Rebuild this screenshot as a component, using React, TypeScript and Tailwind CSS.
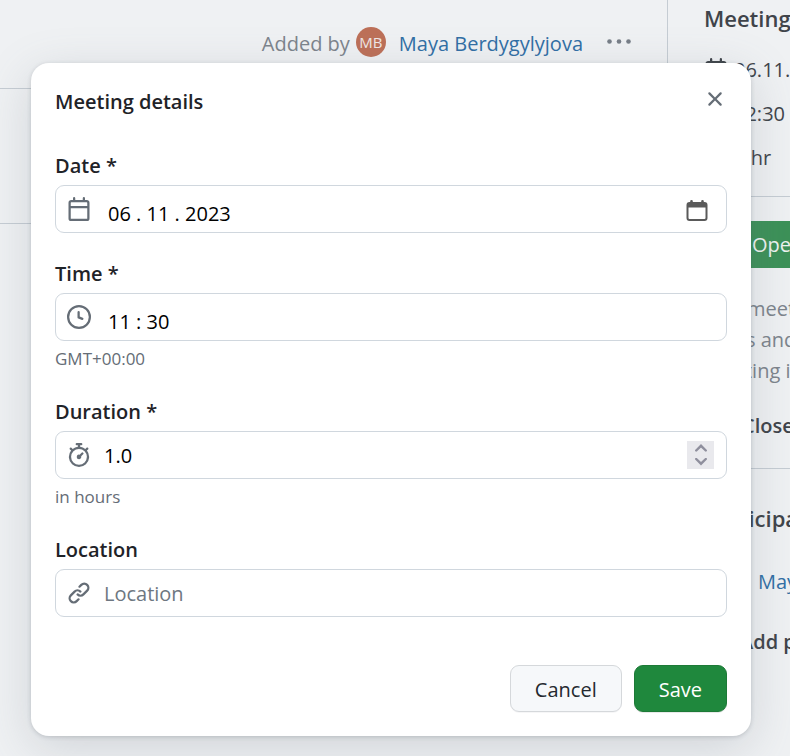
import React, { useState } from "react";

const icons = {
  calendar:
    "M4.75 0a.75.75 0 0 1 .75.75V2h5V.75a.75.75 0 0 1 1.5 0V2h1.25c.966 0 1.75.784 1.75 1.75v10.5A1.75 1.75 0 0 1 13.25 16H2.75A1.75 1.75 0 0 1 1 14.25V3.75C1 2.784 1.784 2 2.75 2H4V.75A.75.75 0 0 1 4.75 0ZM2.5 7.5v6.75c0 .138.112.25.25.25h10.5a.25.25 0 0 0 .25-.25V7.5Zm10.75-4H2.75a.25.25 0 0 0-.25.25V6h11V3.75a.25.25 0 0 0-.25-.25Z",
  clock:
    "M8 0a8 8 0 1 1 0 16A8 8 0 0 1 8 0ZM1.5 8a6.5 6.5 0 1 0 13 0 6.5 6.5 0 0 0-13 0Zm7-3.25v2.992l2.028.812a.75.75 0 0 1-.557 1.392l-2.5-1A.751.751 0 0 1 7 8.25v-3.5a.75.75 0 0 1 1.5 0Z",
  stopwatch:
    "M5.75.75A.75.75 0 0 1 6.5 0h3a.75.75 0 0 1 0 1.5h-.75v1l-.001.041a6.724 6.724 0 0 1 3.464 1.435l.007-.006.75-.75a.749.749 0 0 1 1.275.326.749.749 0 0 1-.215.734l-.75.75-.006.007a6.75 6.75 0 1 1-10.548 0L2.72 5.03l-.75-.75a.751.751 0 0 1 .018-1.042.751.751 0 0 1 1.042-.018l.75.75.007.006A6.72 6.72 0 0 1 7.25 2.541V1.5H6.5a.75.75 0 0 1-.75-.75ZM8 14.5a5.25 5.25 0 1 0-.001-10.501A5.25 5.25 0 0 0 8 14.5Zm.389-6.7 1.33-1.33a.75.75 0 1 1 1.061 1.06L9.45 8.861A1.503 1.503 0 0 1 8 10.75a1.499 1.499 0 1 1 .389-2.95Z",
  link: "m7.775 3.275 1.25-1.25a3.5 3.5 0 1 1 4.95 4.95l-2.5 2.5a3.5 3.5 0 0 1-4.95 0 .751.751 0 0 1 .018-1.042.751.751 0 0 1 1.042-.018 1.998 1.998 0 0 0 2.83 0l2.5-2.5a2.002 2.002 0 0 0-2.83-2.83l-1.25 1.25a.751.751 0 0 1-1.042-.018.751.751 0 0 1-.018-1.042Zm-4.69 9.64a1.998 1.998 0 0 0 2.83 0l1.25-1.25a.751.751 0 0 1 1.042.018.751.751 0 0 1 .018 1.042l-1.25 1.25a3.5 3.5 0 1 1-4.95-4.95l2.5-2.5a3.5 3.5 0 0 1 4.95 0 .751.751 0 0 1-.018 1.042.751.751 0 0 1-1.042.018 1.998 1.998 0 0 0-2.83 0l-2.5 2.5a1.998 1.998 0 0 0 0 2.83Z",
  x: "M3.72 3.72a.75.75 0 0 1 1.06 0L8 6.94l3.22-3.22a.749.749 0 0 1 1.275.326.749.749 0 0 1-.215.734L9.06 8l3.22 3.22a.749.749 0 0 1-.326 1.275.749.749 0 0 1-.734-.215L8 9.06l-3.22 3.22a.751.751 0 0 1-1.042-.018.751.751 0 0 1-.018-1.042L6.94 8 3.72 4.78a.75.75 0 0 1 0-1.06Z",
};

function Icon({ name }: { name: keyof typeof icons }) {
  return (
    <svg viewBox="0 0 16 16" className="size-6 shrink-0 fill-current" aria-hidden="true">
      <path d={icons[name]} />
    </svg>
  );
}

type FieldProps = {
  id: string;
  label: string;
  icon: keyof typeof icons;
  initial?: string;
  placeholder?: string;
  hint?: string;
  segmented?: boolean;
  children?: React.ReactNode;
};

function Field({ id, label, icon, initial = "", placeholder, hint, segmented, children }: FieldProps) {
  const [value, setValue] = useState(initial);
  return (
    <div>
      <label htmlFor={id} className="block pt-px pb-[3px] text-[20px] leading-8 font-semibold text-[#1f2328]">
        {label}
      </label>
      <div className="flex h-12 items-center rounded-[9px] border border-[#d0d7de] bg-white pr-3 pl-[11px] text-[#656d76]">
        <Icon name={icon} />
        <input
          id={id}
          type="text"
          value={value}
          placeholder={placeholder}
          onChange={(e) => setValue(e.target.value)}
          className={
            "min-w-0 flex-1 bg-transparent text-[20px] leading-8 text-black outline-none placeholder:text-[#6e7781] " +
            (segmented ? "pt-[10px] pl-[17px]" : "pt-[2px] pl-[13px]")
          }
        />
        {children}
      </div>
      {hint && <p className="pt-[6px] text-[17px] leading-6 text-[#656d76]">{hint}</p>}
    </div>
  );
}

function Dialog() {
  return (
    <div
      role="dialog"
      aria-labelledby="dialog-title"
      className="w-full max-w-[720px] rounded-[18px] bg-white p-6 shadow-[0_1px_4px_rgba(66,74,83,0.22),0_12px_48px_rgba(100,110,122,0.22)]"
    >
      <div className="-mt-[11px] flex items-center justify-between">
        <h1 id="dialog-title" className="pt-[6px] text-[20px] leading-10 font-semibold text-[#1f2328]">
          Meeting details
        </h1>
        <button type="button" aria-label="Close" className="text-[#656d76]">
          <Icon name="x" />
        </button>
      </div>
      <form className="flex flex-col gap-6 pt-[27px]">
        <Field id="date" label="Date *" icon="calendar" initial="06 . 11 . 2023" segmented>
          <button type="button" aria-label="Show date picker" className="pt-1 pr-[5px] text-[#5a5a5a]">
            <svg viewBox="0 0 24 24" className="size-6" aria-hidden="true">
              <path
                fill="currentColor"
                fillRule="evenodd"
                d="M6.500 1a1.300 1.300 0 0 1 1.300 1.300V3h8.400v-.7a1.300 1.300 0 0 1 2.600 0V3H19.500a3 3 0 0 1 3 3v13a3 3 0 0 1-3 3h-15a3 3 0 0 1-3-3V6a3 3 0 0 1 3-3h.7v-.7A1.300 1.300 0 0 1 6.500 1ZM3.500 8.500V19a1 1 0 0 0 1 1h15a1 1 0 0 0 1-1V8.500Z"
              />
            </svg>
          </button>
        </Field>
        <Field id="time" label="Time *" icon="clock" initial="11 : 30" hint="GMT+00:00" segmented />
        <Field id="duration" label="Duration *" icon="stopwatch" initial="1.0" hint="in hours">
          <div className="flex h-7 w-[27px] flex-col items-center bg-[#e9e9ed] text-[#8f8f9d]">
            <button type="button" aria-label="Increase duration" className="flex h-1/2 items-center">
              <svg viewBox="0 0 12 8" className="h-2 w-3" aria-hidden="true">
                <path d="M1.200 6.500 6 1.800l4.800 4.700" fill="none" stroke="currentColor" strokeWidth="2.400" strokeLinecap="round" />
              </svg>
            </button>
            <button type="button" aria-label="Decrease duration" className="flex h-1/2 items-center">
              <svg viewBox="0 0 12 8" className="h-2 w-3" aria-hidden="true">
                <path d="M1.200 1 6 5.700l4.800-4.700" fill="none" stroke="currentColor" strokeWidth="2.400" strokeLinecap="round" />
              </svg>
            </button>
          </div>
        </Field>
        <Field id="location" label="Location" icon="link" placeholder="Location" />
        <div className="flex justify-end gap-3 pt-6 text-[20px]">
          <button
            type="button"
            className="h-[47px] rounded-[9px] border border-[#d5d8db] bg-[#f6f8fa] px-6 pt-[2px] text-[#24292f] shadow-[0_1px_0_rgba(31,35,40,0.04)]"
          >
            Cancel
          </button>
          <button
            type="submit"
            className="h-[47px] rounded-[9px] border border-[#1d7a37] bg-[#1f883d] px-6 pt-[2px] text-white shadow-[0_1px_0_rgba(31,35,40,0.1)]"
          >
            Save
          </button>
        </div>
      </form>
    </div>
  );
}

function Avatar() {
  return (
    <span className="flex size-[30px] shrink-0 items-center justify-center rounded-full bg-[#bd7058] text-[15px] text-[#f0e8e6]">
      MB
    </span>
  );
}

function Page() {
  return (
    <div className="flex min-h-screen items-start text-[20px] leading-8 text-[#3f444a]">
      <main className="min-w-0 flex-1 border-r border-[#c5ccd3] pb-80">
        <div className="flex h-[89px] items-center justify-end border-b border-[#c5ccd3] pr-[35px] pb-1 text-[#7d848c]">
          <span className="pt-1 pr-[6px]">Added by</span>
          <Avatar />
          <a href="#maya" className="pt-1 pl-[13px] text-[#316fa5]">
            Maya Berdygylyjova
          </a>
          <button type="button" aria-label="More actions" className="pl-[23px]">
            <svg viewBox="0 0 26 8" className="h-2 w-[26px] fill-[#777e87]" aria-hidden="true">
              <circle cx="3.500" cy="3.500" r="2.300" />
              <circle cx="13" cy="3.500" r="2.300" />
              <circle cx="22.500" cy="3.500" r="2.300" />
            </svg>
          </button>
        </div>
        <div className="h-[135px] border-b border-[#c5ccd3]" />
      </main>
      <aside className="w-[122px] overflow-hidden pl-9 whitespace-nowrap">
        <h2 className="pt-[2px] text-[22px] leading-8 font-semibold">Meeting details</h2>
        <ul className="flex flex-col gap-3 pt-5 pb-[22px]">
          <li className="flex items-center gap-[6px]">
            <Icon name="calendar" />
            06.11.2023
          </li>
          <li className="flex items-center gap-[6px]">
            <Icon name="clock" />
            12:30 - 13:30
          </li>
          <li className="flex items-center gap-[6px]">
            <Icon name="stopwatch" />1 hr
          </li>
        </ul>
        <div className="border-y border-[#c5ccd3] pt-6 pb-[26px]">
          <button type="button" className="h-[47px] w-40 bg-[#3c9158] pl-12 text-left text-[#eef3f0]">
            Open
          </button>
          <p className="pt-[25px] leading-[31px] text-[#7d848c]">
            This meeting is open. You can add/remove agenda
            <br />
            items and edit them as you please. After the
            <br />
            meeting is over, close it to lock it.
          </p>
          <button type="button" className="flex items-center gap-[14px] pt-6 font-semibold">
            <Icon name="x" />
            Close meeting
          </button>
        </div>
        <h2 className="pt-[31px] text-[22px] leading-9 font-semibold">Participants</h2>
        <a href="#participant" className="flex items-center gap-6 pt-[30px] text-[#316fa5]">
          <Avatar />
          Maya Berdygylyjova
        </a>
        <button type="button" className="flex items-center gap-3 pt-7 font-semibold">
          <Icon name="x" />
          Add participants
        </button>
      </aside>
    </div>
  );
}

export default function App() {
  return (
    <div className="relative min-h-screen overflow-hidden bg-[#eff1f3] font-['Open_Sans','Noto_Sans',sans-serif]">
      <Page />
      <div className="absolute inset-0 flex items-start justify-center pt-[63px] pr-[39px] pl-[31px]">
        <Dialog />
      </div>
    </div>
  );
}
